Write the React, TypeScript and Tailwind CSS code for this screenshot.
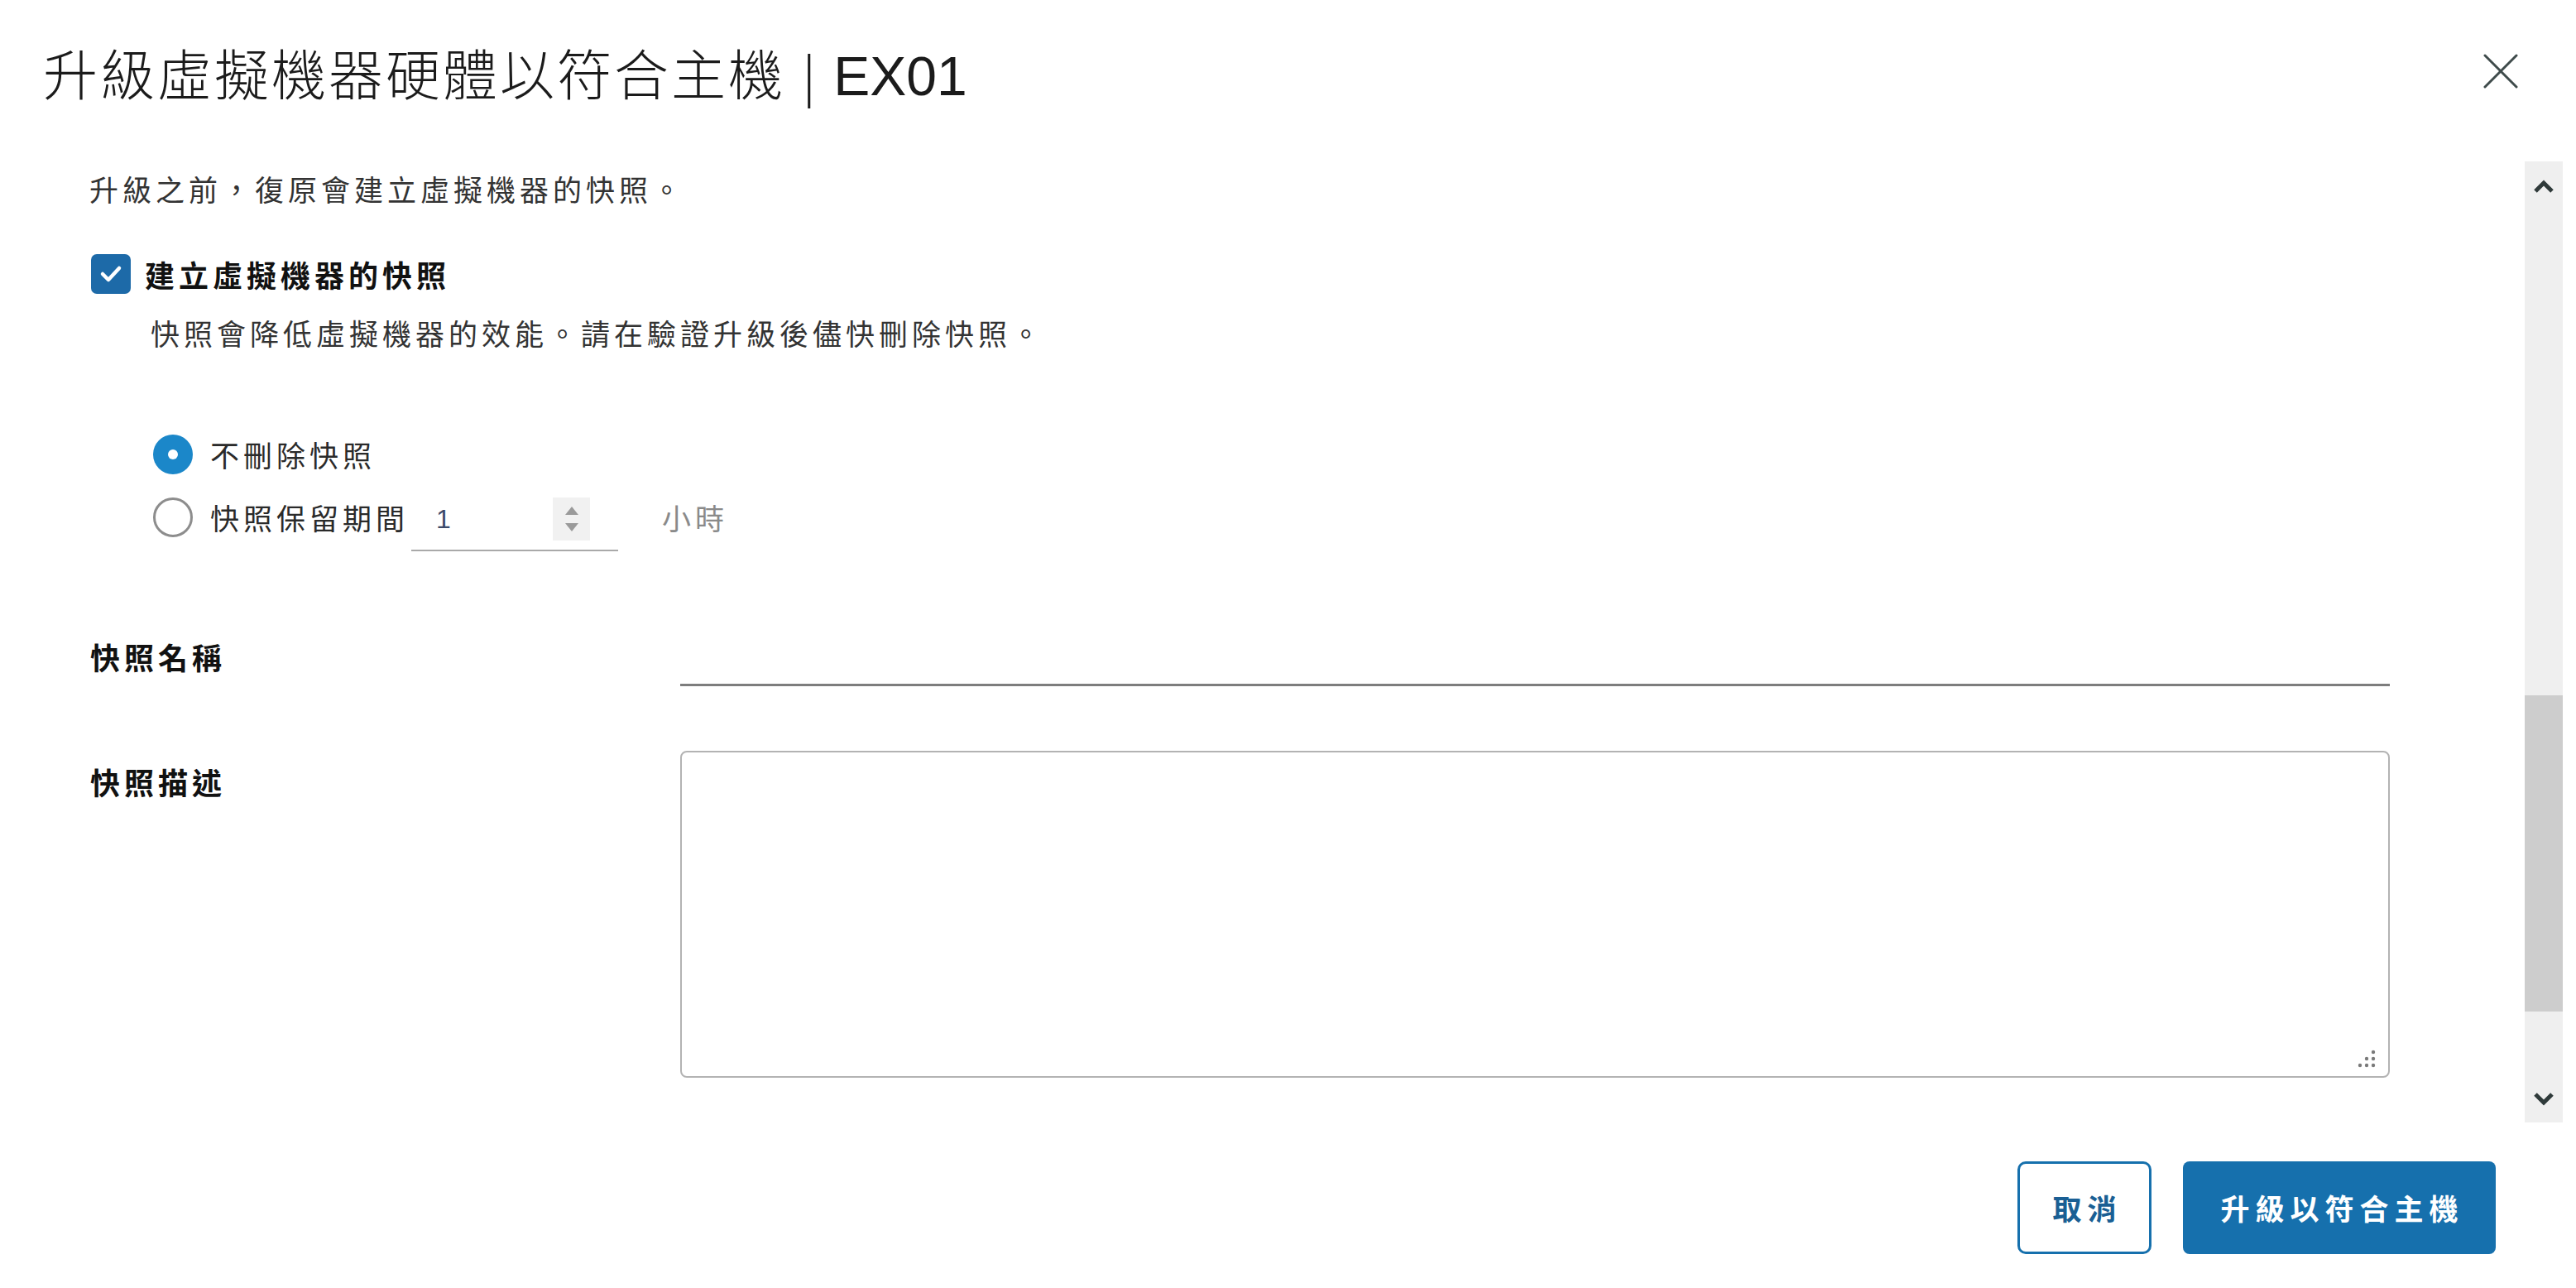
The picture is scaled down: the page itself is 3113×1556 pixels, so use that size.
import React from "react";

const font = "font-['Noto_Sans_CJK_TC','Noto_Sans_CJK_SC',sans-serif]";

const Chevron = ({ up }: { up?: boolean }) => (
  <svg width="26" height="18" viewBox="0 0 26 18" fill="none">
    <polyline
      points={up ? "3,15 13,5 23,15" : "3,3 13,13 23,3"}
      stroke="#2f3a3a"
      strokeWidth="5"
      strokeLinejoin="miter"
    />
  </svg>
);

const App = () => {
  return (
    <div className={`w-[3113px] h-[1556px] bg-white flex flex-col ${font}`}>
      {/* Header */}
      <div className="h-[178px] flex items-center justify-between pl-[52px] pr-[70px]">
        <h1 className="text-[66px] leading-none font-light text-[#1b1b1b] tracking-[3px]">
          升級虛擬機器硬體以符合主機{" "}
          <span className="font-['Liberation_Sans','Noto_Sans_CJK_TC',sans-serif] tracking-normal">
            <span className="font-['DejaVu_Sans',sans-serif] font-extralight">|</span> EX01
          </span>
        </h1>
        <svg width="42" height="42" viewBox="0 0 42 42" className="mb-[6px]">
          <line x1="2" y1="2" x2="40" y2="40" stroke="#3f4b4b" strokeWidth="3" strokeLinecap="round" />
          <line x1="40" y1="2" x2="2" y2="40" stroke="#3f4b4b" strokeWidth="3" strokeLinecap="round" />
        </svg>
      </div>

      {/* Scrollable body */}
      <div className="mt-[17px] h-[1161px] flex justify-between">
        <div className="ml-[108px] w-[2780px] flex flex-col">
          <div className="mt-[9px] h-[48px] flex items-center text-[35px] tracking-[5px] text-[#333]">
            升級之前，復原會建立虛擬機器的快照。
          </div>

          {/* Checkbox */}
          <div className="mt-[55px] h-[48px] flex items-center">
            <div className="ml-[2px] w-[48px] h-[48px] rounded-[7px] bg-[#1d6aa8] flex items-center justify-center">
              <svg width="28" height="22" viewBox="0 0 28 22" fill="none">
                <polyline points="4,11 11,18 24,4" stroke="white" strokeWidth="4.5" strokeLinecap="round" strokeLinejoin="round" />
              </svg>
            </div>
            <span className="ml-[17px] text-[36px] font-bold tracking-[5px] text-[#111]">
              建立虛擬機器的快照
            </span>
          </div>

          <div className="mt-[27px] pl-[74px] h-[40px] flex items-center text-[35px] tracking-[5px] text-[#333]">
            快照會降低虛擬機器的效能。請在驗證升級後儘快刪除快照。
          </div>

          {/* Radios */}
          <div className="mt-[102px] pl-[77px] h-[50px] flex items-center">
            <div className="w-[48px] h-[48px] rounded-full bg-[#1b87c9] flex items-center justify-center">
              <div className="w-[12px] h-[12px] rounded-full bg-white" />
            </div>
            <span className="ml-[21px] text-[35px] tracking-[5px] text-[#2a2a2a]">不刪除快照</span>
          </div>
          <div className="mt-[26px] pl-[77px] h-[50px] flex items-center">
            <div className="w-[48px] h-[48px] rounded-full border-[3px] border-[#8d8d8d]" />
            <span className="ml-[21px] text-[35px] tracking-[5px] text-[#2a2a2a]">快照保留期間</span>
            <div className="ml-[3px] w-[250px] h-[62px] mt-[20px] border-b-2 border-[#a9a9a9] flex items-center pl-[30px] pr-[34px]">
              <span className="font-['Liberation_Sans',sans-serif] text-[32px] text-[#3c4a6a] flex-1 -mt-[14px]">1</span>
              <div className="w-[45px] h-[52px] -mt-[14px] bg-[#f1f1f1] flex flex-col items-center justify-center gap-[10px]">
                <svg width="16" height="10" viewBox="0 0 16 10">
                  <polygon points="8,0 16,10 0,10" fill="#9a9a9a" />
                </svg>
                <svg width="16" height="10" viewBox="0 0 16 10">
                  <polygon points="0,0 16,0 8,10" fill="#9a9a9a" />
                </svg>
              </div>
            </div>
            <span className="ml-[53px] text-[35px] tracking-[5px] text-[#8a8a8a]">小時</span>
          </div>

          {/* Snapshot name */}
          <div className="mt-[119px] flex">
            <div className="w-[714px] pl-[1px] h-[48px] flex items-center text-[36px] font-bold tracking-[5px] text-[#111]">
              快照名稱
            </div>
            <div className="flex-1 h-[60px] border-b-[3px] border-[#7d7d7d]" />
          </div>

          {/* Snapshot description */}
          <div className="mt-[78px] flex">
            <div className="w-[714px] pl-[1px] mt-[13px] h-[48px] flex items-center text-[36px] font-bold tracking-[5px] text-[#111]">
              快照描述
            </div>
            <div className="flex-1 h-[395px] border-2 border-[#b3b3b3] rounded-[8px] flex items-end justify-end pr-[14px] pb-[9px]">
              <svg width="24" height="24" viewBox="0 0 24 24">
                <circle cx="20" cy="4" r="2.2" fill="#7a7a7a" />
                <circle cx="12" cy="12" r="2.2" fill="#7a7a7a" />
                <circle cx="20" cy="12" r="2.2" fill="#7a7a7a" />
                <circle cx="4" cy="20" r="2.2" fill="#7a7a7a" />
                <circle cx="12" cy="20" r="2.2" fill="#7a7a7a" />
                <circle cx="20" cy="20" r="2.2" fill="#7a7a7a" />
              </svg>
            </div>
          </div>
        </div>

        {/* Scrollbar */}
        <div className="mr-[16px] w-[46px] h-full bg-[#efefef] flex flex-col">
          <div className="h-[60px] flex items-center justify-center">
            <Chevron up />
          </div>
          <div className="h-[585px]" />
          <div className="h-[382px] bg-[#cdcdcd]" />
          <div className="h-[78px]" />
          <div className="h-[56px] flex items-center justify-center">
            <Chevron />
          </div>
        </div>
      </div>

      {/* Footer */}
      <div className="mt-[47px] flex justify-end gap-[38px] pr-[97px]">
        <button className="w-[162px] h-[112px] rounded-[10px] border-[3px] border-[#1670ad] bg-white text-[#1a5f94] text-[35px] font-semibold tracking-[7px] pl-[7px]">
          取消
        </button>
        <button className="w-[378px] h-[112px] rounded-[8px] bg-[#1670ad] text-white text-[35px] font-semibold tracking-[7px] pl-[7px]">
          升級以符合主機
        </button>
      </div>
    </div>
  );
};

export default App;
